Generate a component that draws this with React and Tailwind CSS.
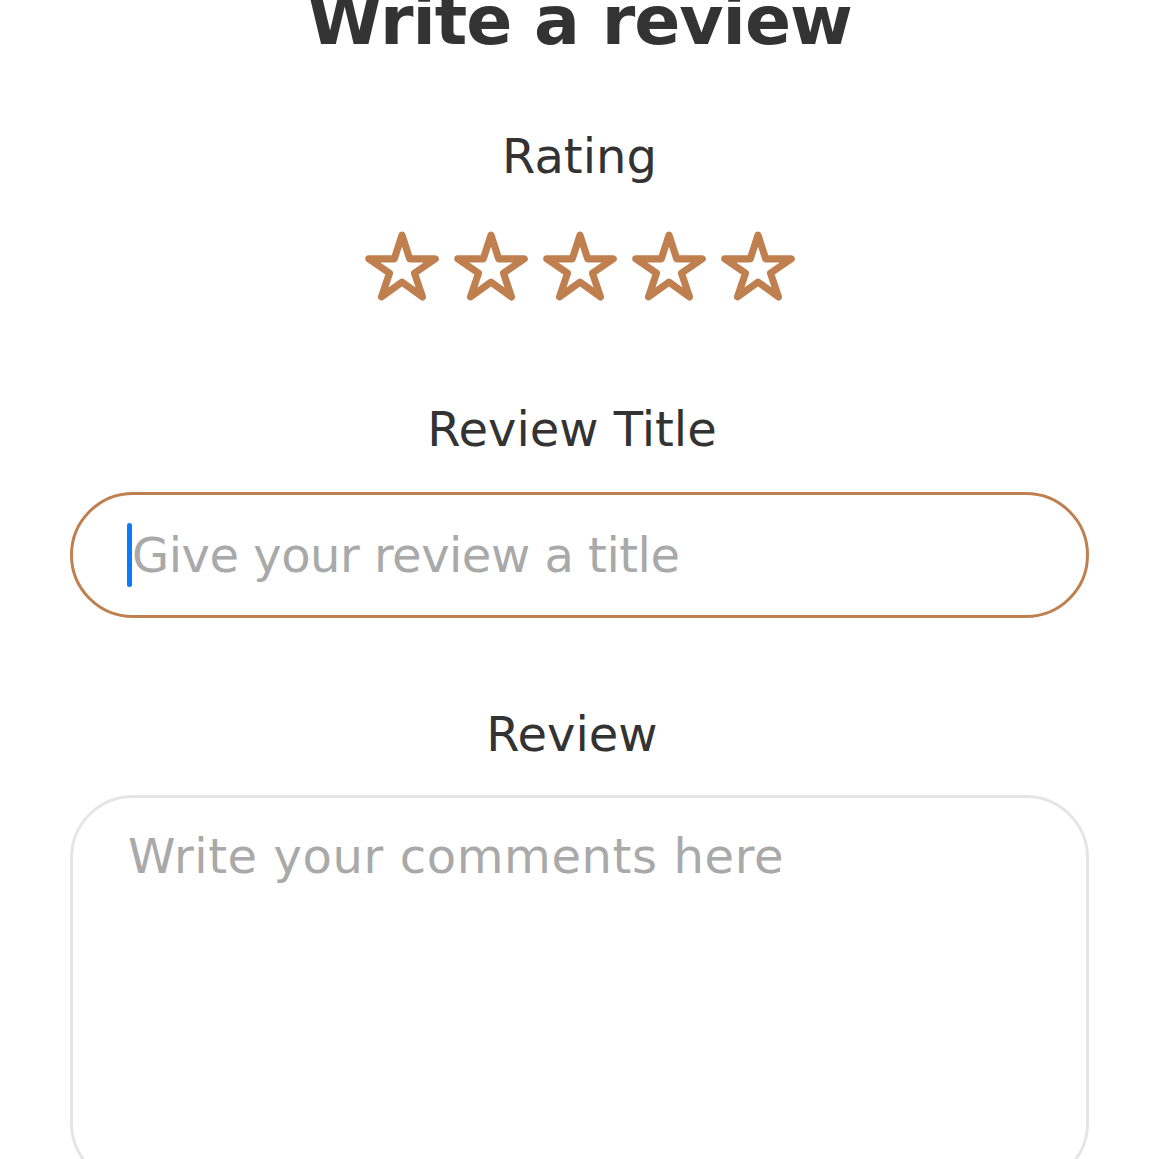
import { useState } from 'react'

const STAR_POINTS = '480 208 308 208 256 48 204 208 32 208 172 304 118 464 256 364 394 464 340 304'

const StarIcon = ({ filled }) => (
  <svg viewBox="0 0 512 512" className="w-[76px] h-[76px]">
    <polygon
      points={STAR_POINTS}
      fill={filled ? '#c07f4f' : 'none'}
      stroke="#c07f4f"
      strokeWidth="48"
      strokeLinejoin="round"
    />
  </svg>
)

const fontStack = { fontFamily: '"DejaVu Sans", "Noto Sans", sans-serif' }

const App = () => {
  const [rating, setRating] = useState(0)
  const [title, setTitle] = useState('')
  const [comments, setComments] = useState('')

  return (
    <div className="min-h-screen bg-white overflow-hidden" style={fontStack}>
      <div className="flex flex-col items-center px-[70px]">
        <h1 className="mt-[-13px] text-[68px] leading-none font-bold text-[#333333] tracking-[-1px]">
          Write a review
        </h1>

        <p className="mt-[77px] text-[48px] leading-none text-[#333333]">Rating</p>

        <div className="mt-[48px] flex gap-[13px]">
          {[1, 2, 3, 4, 5].map((n) => (
            <button key={n} type="button" onClick={() => setRating(n)} className="p-0">
              <StarIcon filled={n <= rating} />
            </button>
          ))}
        </div>

        <p className="mt-[101px] pr-[15px] text-[48px] leading-none text-[#333333]">Review Title</p>

        <label className="mt-[39px] w-full h-[126px] flex items-center rounded-full border-[3px] border-[#c07f4f] pl-[54px] pr-[55px]">
          <span className="w-[5px] h-[64px] rounded-full bg-[#0a7aff] shrink-0"></span>
          <input
            value={title}
            onChange={(e) => setTitle(e.target.value)}
            placeholder="Give your review a title"
            className="flex-1 min-w-0 bg-transparent outline-none text-[48px] leading-none tracking-[-0.5px] text-[#333333] placeholder:text-[#a9a9a9]"
            style={fontStack}
          />
        </label>

        <p className="mt-[92px] pr-[15px] text-[48px] leading-none text-[#333333]">Review</p>

        <textarea
          value={comments}
          onChange={(e) => setComments(e.target.value)}
          placeholder="Write your comments here"
          className="mt-[37px] w-full h-[391px] shrink-0 resize-none rounded-[63px] border-[3px] border-[#e5e5e5] pt-[34px] px-[55px] outline-none text-[48px] leading-none tracking-[0.6px] text-[#333333] placeholder:text-[#a9a9a9]"
          style={fontStack}
        />
      </div>
    </div>
  )
}

export default App
